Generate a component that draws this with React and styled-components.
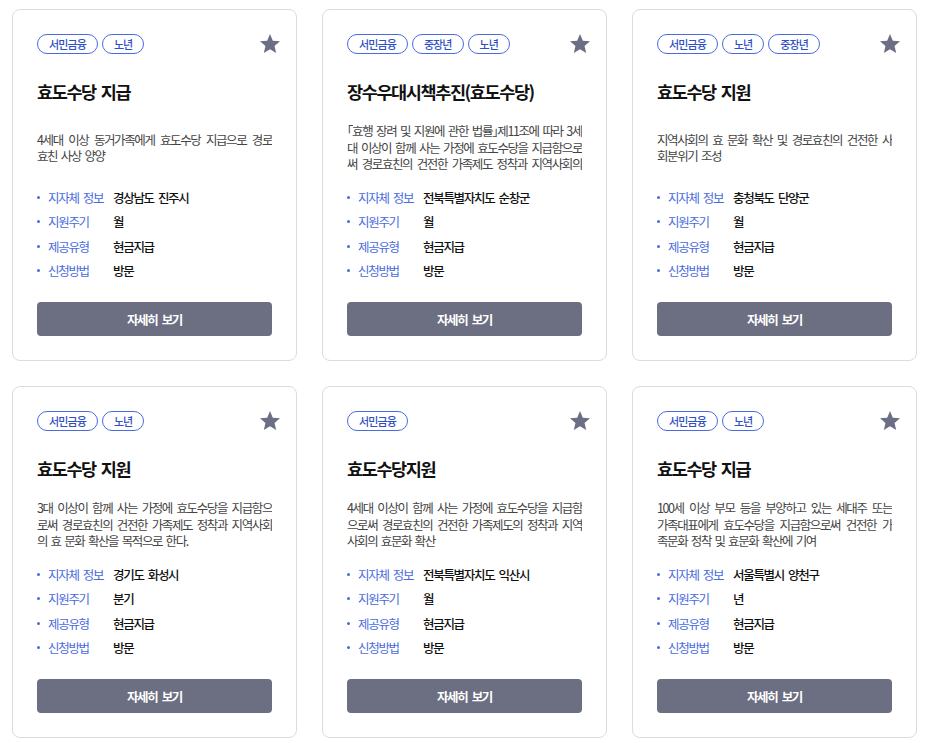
import React from "react";
import styled, { createGlobalStyle } from "styled-components";

const GlobalStyle = createGlobalStyle`
  html, body { margin: 0; padding: 0; background: #ffffff; }
  body { font-family: "Noto Sans CJK KR", "Noto Sans", sans-serif; color: #111; }
  * { box-sizing: border-box; }
`;

const Grid = styled.div`
  display: grid;
  grid-template-columns: repeat(3, 285px);
  column-gap: 25px;
  row-gap: 25px;
  padding: 9px 12px;
`;

const Card = styled.article`
  display: flex;
  flex-direction: column;
  background: #fff;
  border: 1px solid #dcdcdf;
  border-radius: 8px;
  padding: 24px 24px 24px;
`;

const Header = styled.div`
  display: flex;
  align-items: center;
  justify-content: space-between;
  height: 20px;
`;

const Tags = styled.div`
  display: flex;
  gap: 4px;
`;

const Tag = styled.span`
  display: inline-flex;
  align-items: center;
  justify-content: center;
  height: 20px;
  padding: 0 11px;
  border: 1px solid #4a6be0;
  border-radius: 10px;
  color: #2f4fc4;
  font-size: 11px;
  font-weight: 500;
  letter-spacing: -0.9px;
  white-space: nowrap;
`;

const StarButton = styled.button`
  display: flex;
  border: none;
  background: none;
  padding: 0;
  margin: -2px -10px -2px 0;
  cursor: pointer;
  color: #6b6e84;
`;

const Title = styled.h3`
  margin: 26px 0 0;
  font-size: 17.5px;
  line-height: 24px;
  font-weight: 700;
  letter-spacing: -1.4px;
  word-spacing: 2.5px;
  color: #111;
`;

const DescBox = styled.div`
  display: flex;
  align-items: center;
  height: 50px;
  margin-top: 19px;
`;

const Desc = styled.p`
  margin: 0;
  width: 100%;
  max-height: 49.5px;
  overflow: hidden;
  font-size: 12.5px;
  line-height: 16.5px;
  letter-spacing: -1.4px;
  word-spacing: 2.1px;
  font-feature-settings: "halt";
  color: #444444;
  text-align: justify;
`;

const InfoList = styled.ul`
  list-style: none;
  margin: 12px 0 0;
  padding: 0;
`;

const InfoItem = styled.li`
  display: flex;
  align-items: center;
  height: 24.5px;
  font-size: 12.5px;
  letter-spacing: -1.3px;
  word-spacing: 2.6px;
`;

const Bullet = styled.span`
  width: 3px;
  height: 3px;
  border-radius: 50%;
  background: #4a6be0;
  margin: 0 8px 0 0;
  flex-shrink: 0;
`;

const Label = styled.span`
  width: 65px;
  flex-shrink: 0;
  white-space: nowrap;
  color: #4a6be0;
`;

const Value = styled.span`
  color: #111;
  font-weight: 500;
  white-space: nowrap;
`;

const DetailButton = styled.button`
  margin-top: 19px;
  height: 34px;
  width: 100%;
  border: none;
  border-radius: 4px;
  background: #6c6e82;
  color: #fff;
  font-family: inherit;
  font-size: 12.5px;
  font-weight: 700;
  letter-spacing: -1.3px;
  word-spacing: 2.6px;
  cursor: pointer;
`;

const StarIcon = () => (
  <svg width="24" height="24" viewBox="0 0 24 24" fill="currentColor" aria-hidden="true">
    <path d="M12 17.27L18.18 21l-1.64-7.03L22 9.24l-7.19-.61L12 2 9.19 8.63 2 9.24l5.46 4.73L5.82 21z" />
  </svg>
);

const cards = [
  {
    tags: ["서민금융", "노년"],
    title: "효도수당 지급",
    desc: "4세대 이상 동거가족에게 효도수당 지급으로 경로 효친 사상 양양",
    region: "경상남도 진주시",
    cycle: "월",
  },
  {
    tags: ["서민금융", "중장년", "노년"],
    title: "장수우대시책추진(효도수당)",
    desc: "「효행 장려 및 지원에 관한 법률」제11조에 따라 3세대 이상이 함께 사는 가정에 효도수당을 지급함으로써 경로효친의 건전한 가족제도 정착과 지역사회의 효 문화 확산을 목적으로 한다.",
    region: "전북특별자치도 순창군",
    cycle: "월",
  },
  {
    tags: ["서민금융", "노년", "중장년"],
    title: "효도수당 지원",
    desc: "지역사회의 효 문화 확산 및 경로효친의 건전한 사회분위기 조성",
    region: "충청북도 단양군",
    cycle: "월",
  },
  {
    tags: ["서민금융", "노년"],
    title: "효도수당 지원",
    desc: "3대 이상이 함께 사는 가정에 효도수당을 지급함으로써 경로효친의 건전한 가족제도 정착과 지역사회의 효 문화 확산을 목적으로 한다.",
    region: "경기도 화성시",
    cycle: "분기",
  },
  {
    tags: ["서민금융"],
    title: "효도수당지원",
    desc: "4세대 이상이 함께 사는 가정에 효도수당을 지급함으로써 경로효친의 건전한 가족제도의 정착과 지역사회의 효문화 확산",
    region: "전북특별자치도 익산시",
    cycle: "월",
  },
  {
    tags: ["서민금융", "노년"],
    title: "효도수당 지급",
    desc: "100세 이상 부모 등을 부양하고 있는 세대주 또는 가족대표에게 효도수당을 지급함으로써 건전한 가족문화 정착 및 효문화 확산에 기여",
    region: "서울특별시 양천구",
    cycle: "년",
  },
];

function BenefitCard({ card }) {
  const rows = [
    ["지자체 정보", card.region],
    ["지원주기", card.cycle],
    ["제공유형", "현금지급"],
    ["신청방법", "방문"],
  ];
  return (
    <Card>
      <Header>
        <Tags>
          {card.tags.map((t) => (
            <Tag key={t}>{t}</Tag>
          ))}
        </Tags>
        <StarButton aria-label="즐겨찾기">
          <StarIcon />
        </StarButton>
      </Header>
      <Title>{card.title}</Title>
      <DescBox>
        <Desc>{card.desc}</Desc>
      </DescBox>
      <InfoList>
        {rows.map(([k, v]) => (
          <InfoItem key={k}>
            <Bullet />
            <Label>{k}</Label>
            <Value>{v}</Value>
          </InfoItem>
        ))}
      </InfoList>
      <DetailButton>자세히 보기</DetailButton>
    </Card>
  );
}

export default function App() {
  return (
    <>
      <GlobalStyle />
      <Grid>
        {cards.map((c, i) => (
          <BenefitCard key={i} card={c} />
        ))}
      </Grid>
    </>
  );
}
